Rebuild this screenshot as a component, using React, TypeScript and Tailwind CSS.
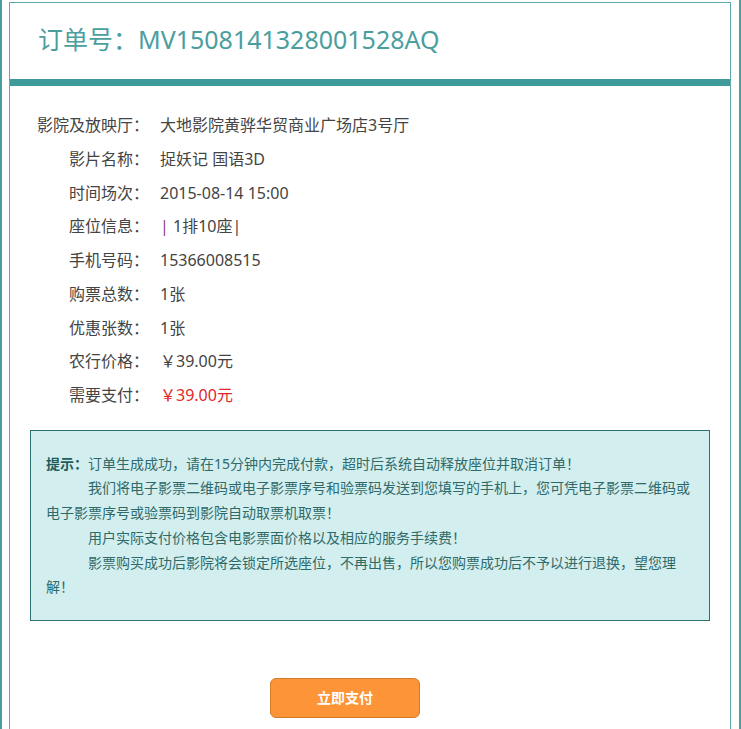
import React from "react";

const rows: { label: string; value: React.ReactNode }[] = [
  { label: "影院及放映厅：", value: "大地影院黄骅华贸商业广场店3号厅" },
  { label: "影片名称：", value: "捉妖记 国语3D" },
  { label: "时间场次：", value: "2015-08-14 15:00" },
  {
    label: "座位信息：",
    value: (
      <>
        <span className="text-[#8e3d7d]">|</span> 1排10座|
      </>
    ),
  },
  { label: "手机号码：", value: "15366008515" },
  { label: "购票总数：", value: "1张" },
  { label: "优惠张数：", value: "1张" },
  { label: "农行价格：", value: "￥39.00元" },
  { label: "需要支付：", value: <span className="text-[#e3262b]">￥39.00元</span> },
];

export default function App() {
  return (
    <div
      className="h-[729px] w-[741px] overflow-hidden bg-white"
      style={{ fontFamily: '"Noto Sans", "Noto Sans CJK SC", sans-serif' }}
    >
      <div className="h-full w-[741px] border-l-2 border-r-2 border-[#4a9d9d] pl-[7px] pr-[8px] pt-[2px]">
        <div className="h-full border border-b-0 border-[#5fa8a8]">
          {/* header */}
          <div className="flex h-[76px] items-center pl-[28px]">
            <h1 className="-mt-[4px] text-[25px] font-normal leading-none text-[#4b9e9e]">
              订单号：MV1508141328001528AQ
            </h1>
          </div>
          <div className="h-[7px] bg-[#3f9a9a]" />

          {/* details */}
          <div className="pt-[23px] text-[16px] text-[#444]">
            {rows.map((r) => (
              <div key={r.label} className="flex leading-[33.75px]">
                <div className="w-[139px] shrink-0 text-right">{r.label}</div>
                <div className="pl-[11px]">{r.value}</div>
              </div>
            ))}
          </div>

          {/* tips */}
          <div className="mx-[20px] mt-[17px] border border-[#2d7171] bg-[#d3eeee] px-[15px] pt-[21px] pb-[20px] text-[14px] leading-[24.7px] text-[#2e6a6a]">
            <p>
              <b className="font-bold text-[#1f5d5d]">提示：</b>订单生成成功，请在15分钟内完成付款，超时后系统自动释放座位并取消订单！
            </p>
            <p className="indent-[42px]">
              我们将电子影票二维码或电子影票序号和验票码发送到您填写的手机上，您可凭电子影票二维码或电子影票序号或验票码到影院自动取票机取票！
            </p>
            <p className="indent-[42px]">用户实际支付价格包含电影票面价格以及相应的服务手续费！</p>
            <p className="indent-[42px]">
              影票购买成功后影院将会锁定所选座位，不再出售，所以您购票成功后不予以进行退换，望您理解！
            </p>
          </div>

          {/* pay */}
          <div className="mt-[57px] pl-[260px]">
            <button className="h-[40px] w-[150px] rounded-[6px] border border-[#d57b2c] bg-[#fd9437] text-[14px] font-bold text-white">
              立即支付
            </button>
          </div>
        </div>
      </div>
    </div>
  );
}
